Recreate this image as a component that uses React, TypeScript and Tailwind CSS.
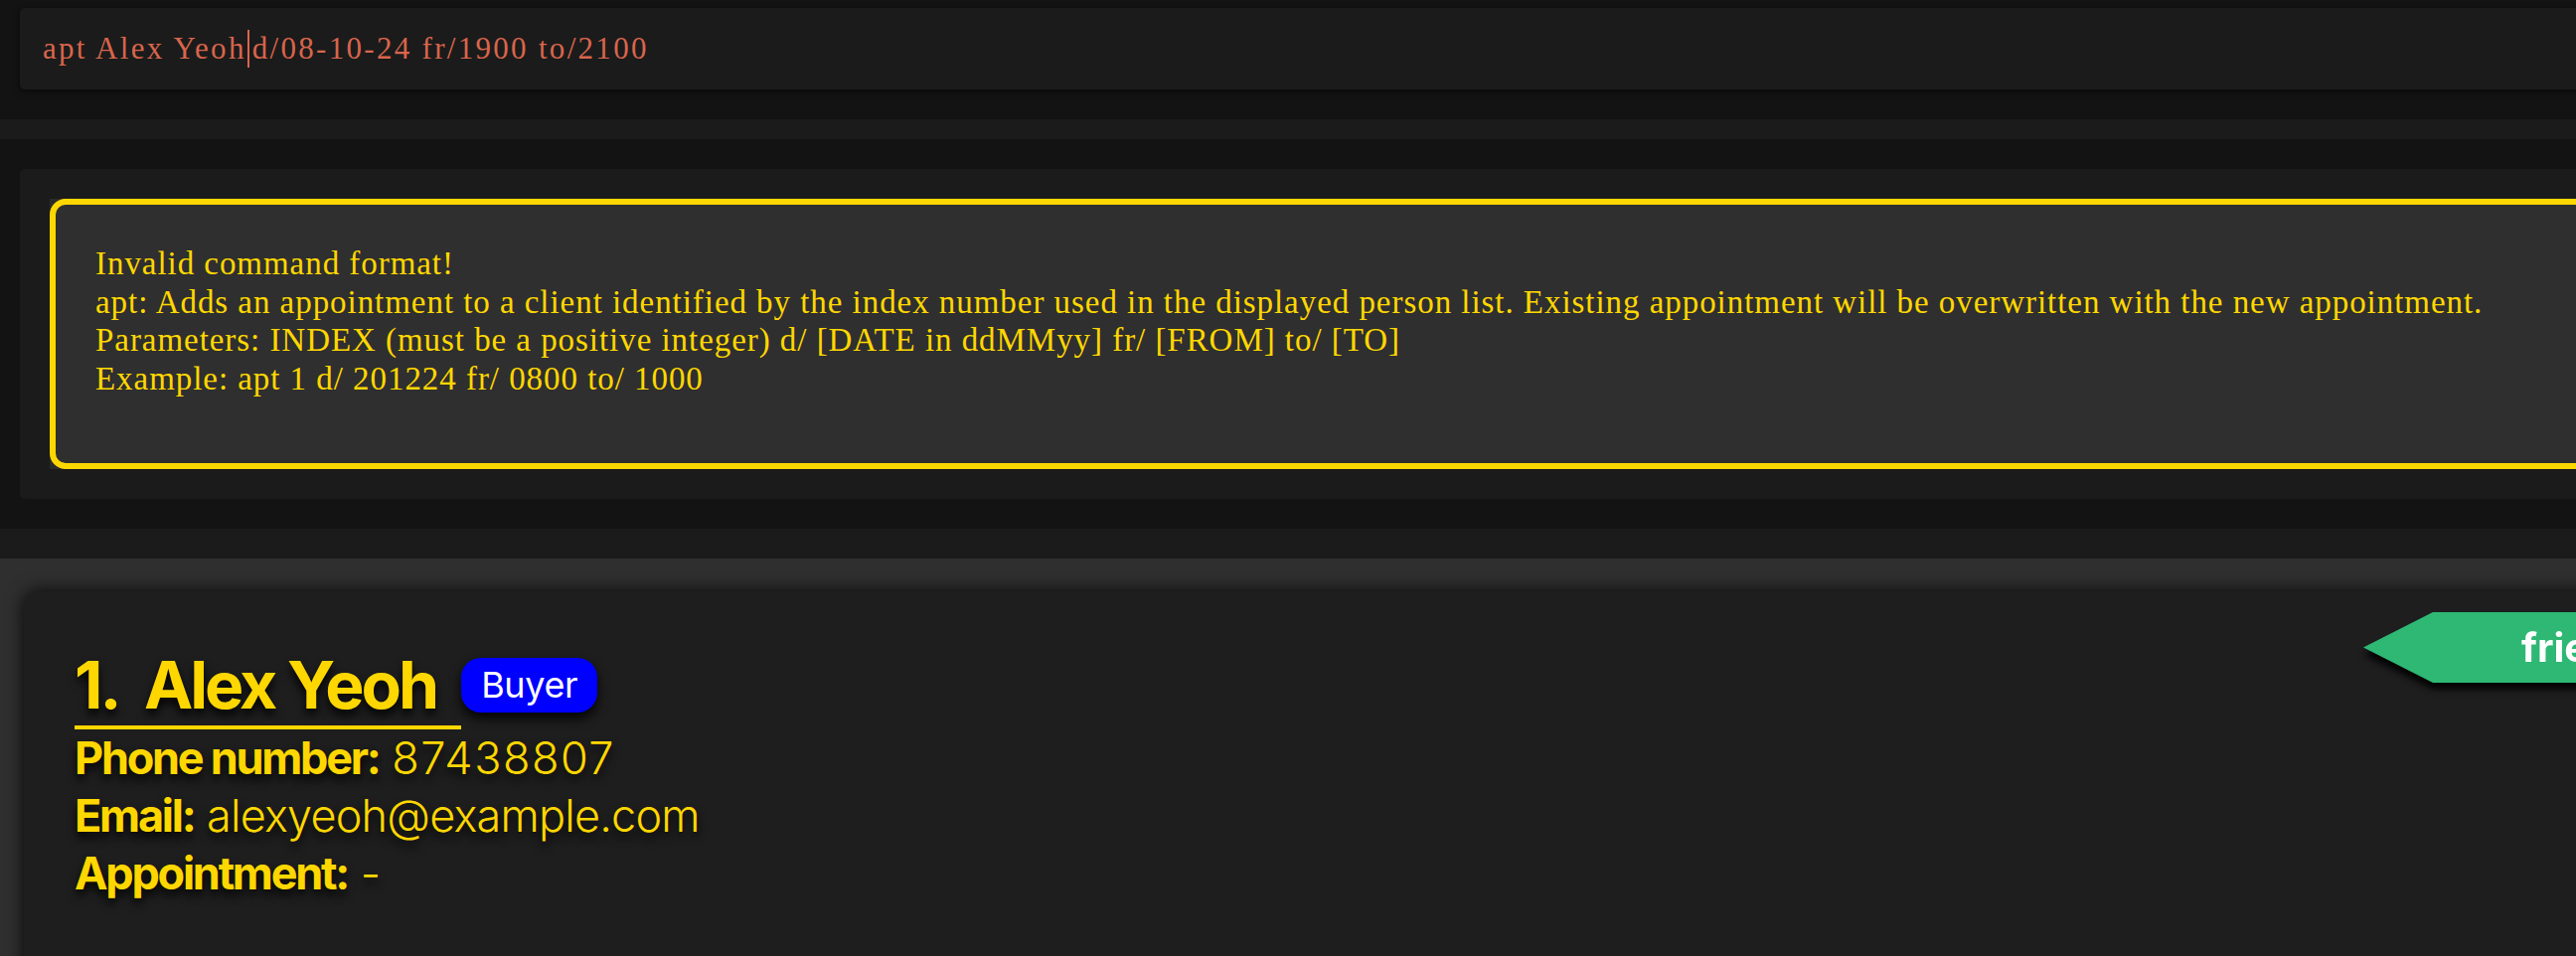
import React from 'react';

const serif = { fontFamily: '"Liberation Serif", "DejaVu Serif", serif' };

const resultLines = [
  'Invalid command format!',
  'apt: Adds an appointment to a client identified by the index number used in the displayed person list. Existing appointment will be overwritten with the new appointment.',
  'Parameters: INDEX (must be a positive integer) d/ [DATE in ddMMyy] fr/ [FROM] to/ [TO]',
  'Example: apt 1 d/ 201224 fr/ 0800 to/ 1000',
];

function CommandBox() {
  return (
    <div className="shrink-0 h-[120px] pl-[20px] pt-[8px]">
      <div
        className="h-[82px] -mr-[60px] rounded-[5px] bg-[#1b1b1b] shadow-[0_2px_6px_rgba(0,0,0,0.6)] pl-[23px] flex items-center text-[#d9654c] text-[31px] tracking-[2.3px] whitespace-pre"
        style={serif}
      >
        <span>apt Alex Yeoh</span>
        <span className="inline-block w-[2px] h-[38px] bg-[#d9654c] ml-[1px] mr-[3px]" />
        <span>d/08-10-24 fr/1900 to/2100</span>
      </div>
    </div>
  );
}

function ResultBox() {
  return (
    <div className="shrink-0 pt-[30px] pl-[20px]">
      <div className="h-[332px] -mr-[60px] rounded-[5px] bg-[#1b1b1b] pl-[30px] pt-[30px]">
        <div className="h-[272px] bg-[#2a2a2a]">
          <div
            className="h-full rounded-[16px] border-[6px] border-[#ffd700] bg-[#2f2f2f] pl-[40px] pt-[40px] text-[#ffd700] text-[33px] tracking-[0.95px] leading-[38.5px] whitespace-pre"
            style={serif}
          >
            {resultLines.map((l) => (
              <div key={l}>{l}</div>
            ))}
          </div>
        </div>
      </div>
    </div>
  );
}

function PersonCard() {
  const shadow = '[text-shadow:0_6px_10px_rgba(0,0,0,0.9)]';
  return (
    <div
      className="relative h-[420px] -mr-[60px] rounded-[15px] bg-[#1e1e1e] shadow-[0_0_18px_rgba(0,0,0,0.85)] pl-[51px] pt-[53px] text-[#ffd700]"
      style={{ fontFamily: 'Inter, Roboto, sans-serif' }}
    >
      <div className="flex items-center">
        <div className={`text-[66px] font-bold leading-[82px] tracking-[-0.045em] border-b-4 border-[#ffd700] pr-[25px] ${shadow}`}>
          1.&nbsp; Alex Yeoh
        </div>
        <div className="h-[55px] -mt-[4px] px-[20px] rounded-[20px] bg-[#0000ff] text-white text-[36px] leading-[55px] tracking-[-0.01em] shadow-[0_6px_12px_rgba(0,0,0,0.9)]">
          Buyer
        </div>
      </div>
      <div className={`text-[45px] leading-[58px] ${shadow}`}>
        <div>
          <span className="font-bold tracking-[-0.05em]">Phone number:</span>{' '}
          <span className="font-light tracking-[1.5px]">87438807</span>
        </div>
        <div>
          <span className="font-bold tracking-[-0.05em]">Email:</span>{' '}
          <span className="font-light tracking-[-0.8px]">alexyeoh@example.com</span>
        </div>
        <div>
          <span className="font-bold tracking-[-0.05em]">Appointment:</span>{' '}
          <span className="font-light">-</span>
        </div>
      </div>

      {/* tag sits on the right of the card */}
      <div className="absolute left-[2354px] top-[21px] [filter:drop-shadow(0_7px_3px_rgba(0,0,0,0.85))]">
        <div className="h-[71px] w-[400px] bg-[#2eb874] [clip-path:polygon(0_50%,70px_0,100%_0,100%_100%,70px_100%)] pl-[159px] flex items-center text-white text-[40px] font-bold">
          friends
        </div>
      </div>
    </div>
  );
}

export default function App() {
  return (
    <div className="h-[962px] w-full overflow-hidden bg-[#131313] flex flex-col">
      <CommandBox />
      <div className="shrink-0 h-[20px] bg-[#1b1b1b]" />
      <ResultBox />
      <div className="shrink-0 h-[30px]" />
      <div className="shrink-0 h-[30px] bg-[#1b1b1b]" />
      <div className="flex-1 min-h-0 bg-[#2f2f2f] pt-[33px] pl-[24px]">
        <PersonCard />
      </div>
    </div>
  );
}
